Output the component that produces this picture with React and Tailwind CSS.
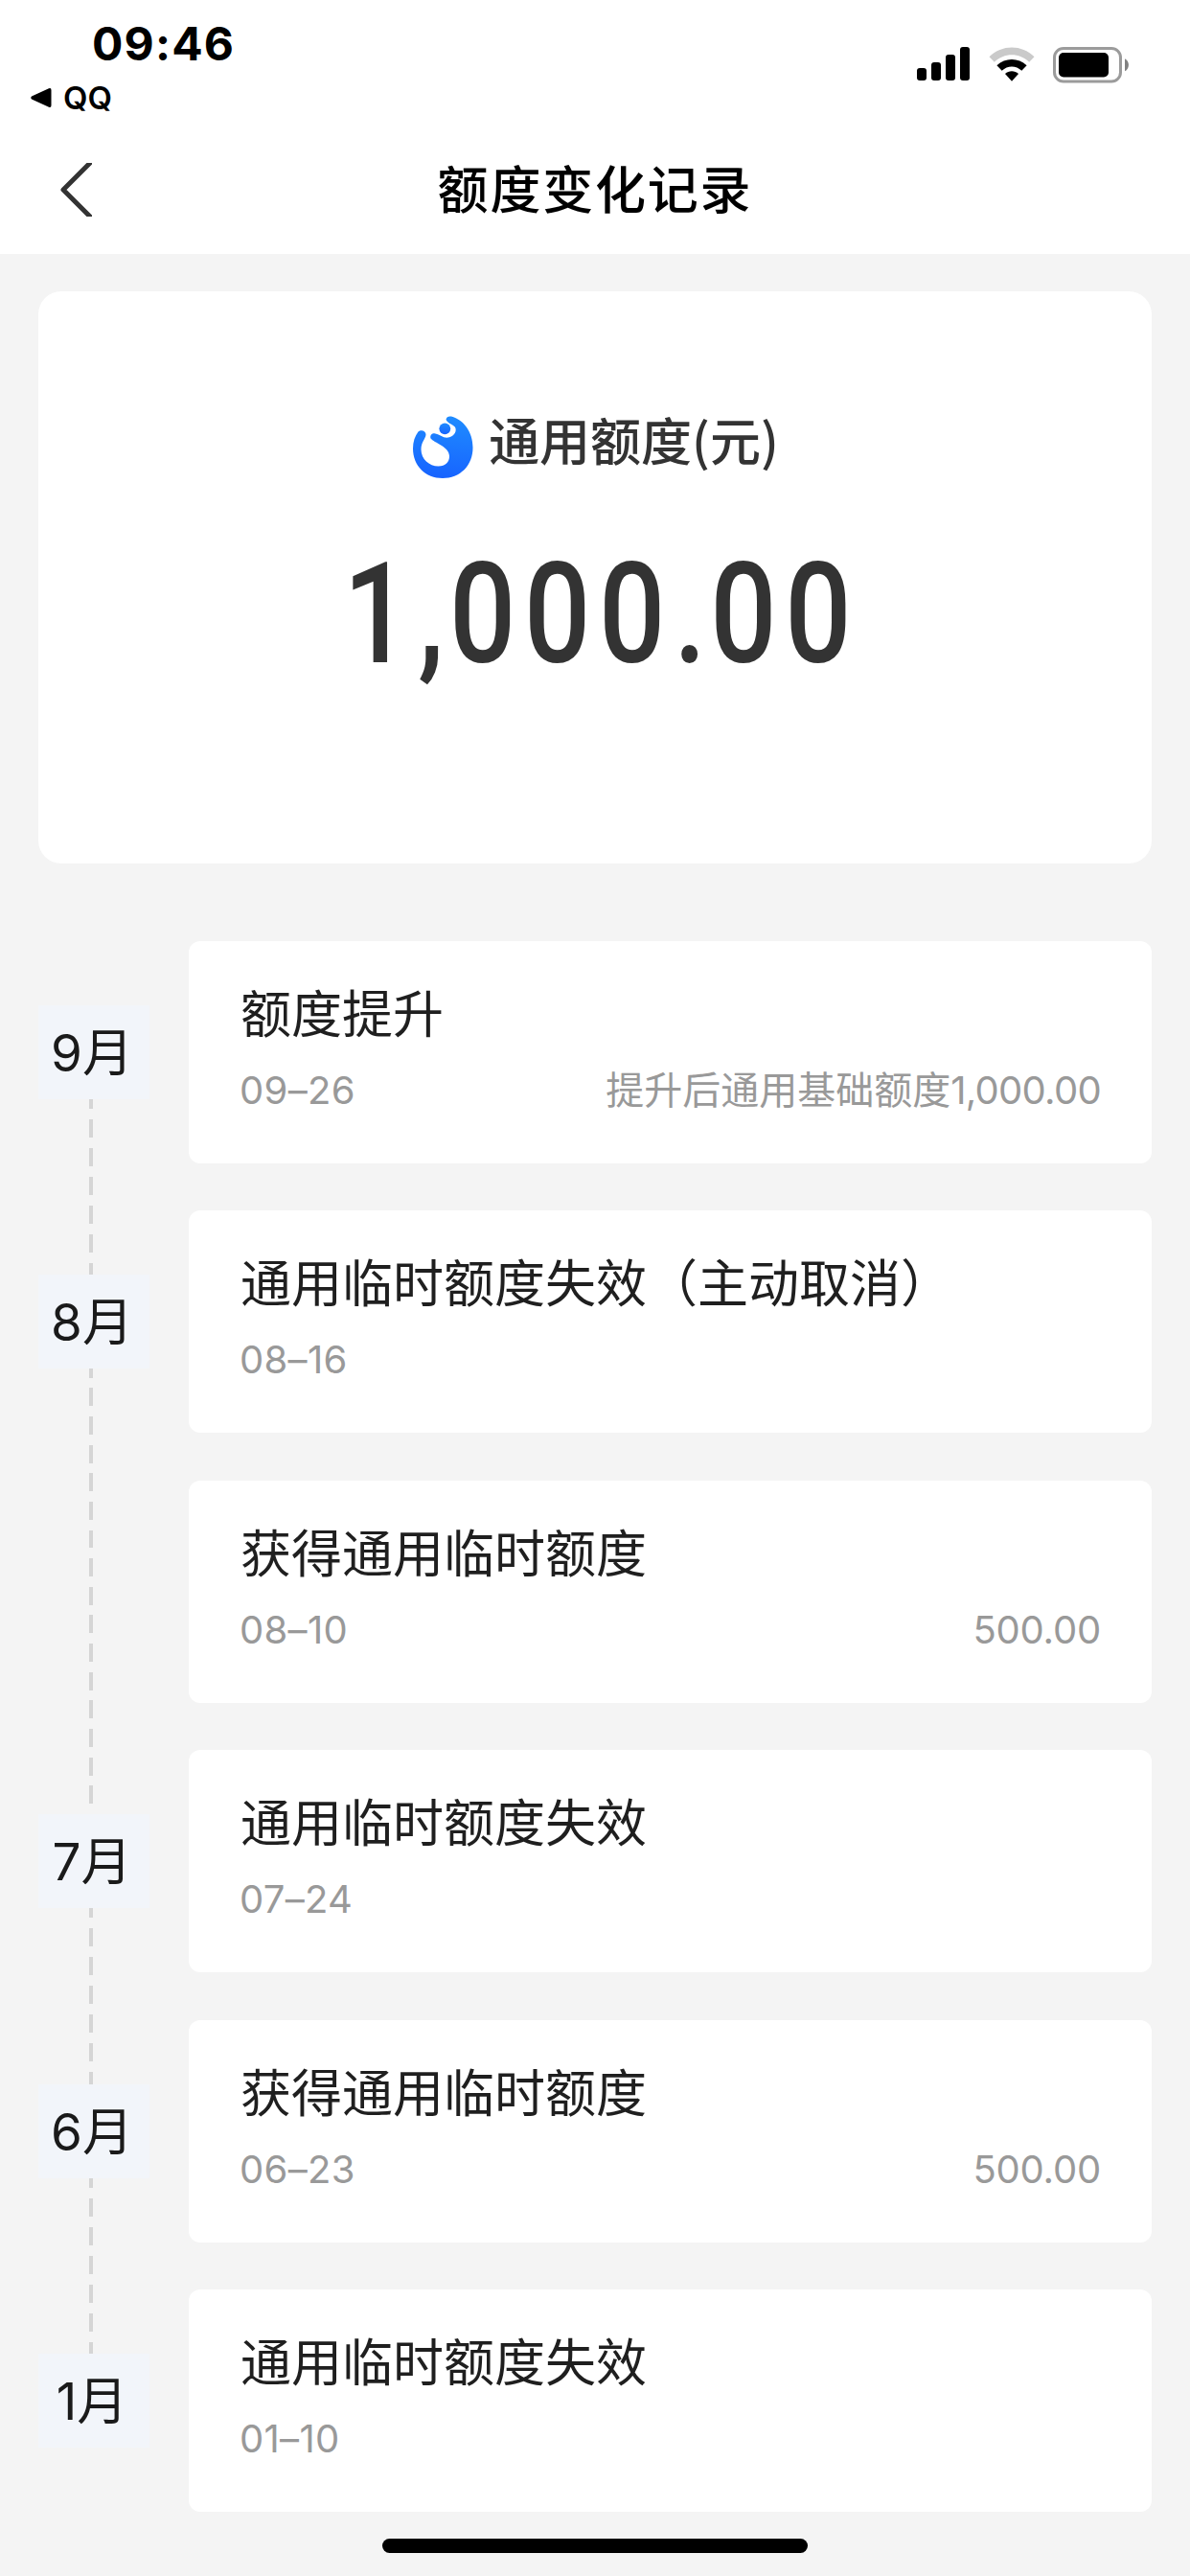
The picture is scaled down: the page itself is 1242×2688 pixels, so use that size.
const CJK = "font-['Inter','Noto_Sans_CJK_SC',sans-serif]";

const months = [
  {
    month: '9月',
    items: [{ title: '额度提升', date: '09–26', note: '提升后通用基础额度', amount: '1,000.00' }],
  },
  {
    month: '8月',
    items: [
      { title: '通用临时额度失效（主动取消）', date: '08–16' },
      { title: '获得通用临时额度', date: '08–10', amount: '500.00' },
    ],
  },
  { month: '7月', items: [{ title: '通用临时额度失效', date: '07–24' }] },
  { month: '6月', items: [{ title: '获得通用临时额度', date: '06–23', amount: '500.00' }] },
  { month: '1月', items: [{ title: '通用临时额度失效', date: '01–10' }] },
];

function SignalIcon() {
  return (
    <svg width="55" height="35" viewBox="0 0 55 35">
      <rect x="0" y="22" width="10" height="13" rx="3" />
      <rect x="15" y="16" width="10" height="19" rx="3" />
      <rect x="30" y="8" width="10" height="27" rx="3" />
      <rect x="45" y="0" width="10" height="35" rx="3" />
    </svg>
  );
}

function WifiIcon() {
  return (
    <svg width="48" height="36" viewBox="0 0 48 36">
      <path d="M0.5 10.2C13.5 -2.9 34.5 -2.9 47.5 10.2L42.2 15.8C32 5.6 16 5.6 5.8 15.8Z" fill="#cacaca" />
      <path d="M8.4 19.3C17.2 10.8 30.8 10.8 39.6 19.3L34.3 24.8C28.4 19.1 19.6 19.1 13.7 24.8Z" />
      <path d="M17 28C21 24.4 27 24.4 31 28L24 35.8Z" />
    </svg>
  );
}

function BatteryIcon() {
  return (
    <svg width="80" height="38" viewBox="0 0 80 38">
      <rect x="1.5" y="1.5" width="69" height="34.5" rx="9.5" fill="none" stroke="#9b9b9b" strokeWidth="3" />
      <rect x="6" y="6" width="52" height="25.5" rx="5" />
      <path d="M75 12.2C80.2 14.5 80.2 23 75 25.3Z" fill="#808080" />
    </svg>
  );
}

function BrandIcon() {
  return (
    <svg width="63" height="66" viewBox="0 0 63 66">
      <defs>
        <linearGradient id="brand" x1="0.5" y1="0" x2="0.4" y2="1">
          <stop offset="0" stopColor="#1f8bff" />
          <stop offset="1" stopColor="#1763ff" />
        </linearGradient>
      </defs>
      <path
        fill="url(#brand)"
        d="M34.5 3.8C34.8 1 37.5 0 40 0.600C53 4 62.500 17 62.500 33C62.500 52 49 65 31 65C13 65 0 52 0 34C0 27 2 21 5.500 16.500C8 14 13 15 13.500 19C13.600 23.500 8.500 27 8.500 35C8.500 45 17 52.500 26.500 52.500C34 52.500 38 48 38 42C38 32 22 28 18.500 23.500C17.500 20.500 19.500 17.800 22.500 18.200C28 19.300 32 23.500 37 22.500C42 21.500 45.500 17.500 44.500 13C43.500 9 36 8.500 34.500 3.800Z"
      />
      <circle cx="33.300" cy="13.300" r="5.900" fill="url(#brand)" />
    </svg>
  );
}

function Record({ title, date, note, amount }) {
  return (
    <div className="h-[232px] rounded-xl bg-white px-[54px] pt-[46px]">
      <div className="h-[62px] text-[53px] leading-[62px] whitespace-nowrap text-[#1f1f1f]">{title}</div>
      <div className="mt-[23px] flex h-[50px] items-center justify-between text-[40px] leading-[50px] whitespace-nowrap text-[#999]">
        <span className="-ml-px font-[370] tracking-[0.3px]">{date}</span>
        <span className="-mr-px">
          {note}
          <span className={note ? 'font-[370] tracking-[-0.7px]' : 'font-[370] tracking-[-0.2px]'}>{amount}</span>
        </span>
      </div>
    </div>
  );
}

const shortDash =
  'bg-[repeating-linear-gradient(to_bottom,#d5d5d5_0px,#d5d5d5_10px,transparent_10px,transparent_21px,#d5d5d5_21px,#d5d5d5_30px)]';
const longDash =
  'bg-[repeating-linear-gradient(to_bottom,#d5d5d5_0px,#d5d5d5_9.6px,transparent_9.6px,transparent_20.3px,#d5d5d5_20.3px,#d5d5d5_29.64px)]';

function MonthGroup({ month, items, last }) {
  return (
    <section className="flex">
      <div className="flex w-[157px] flex-col">
        <div className="mt-[67px] flex h-[98px] w-[116px] items-center justify-center bg-[#f2f5fa] pt-[2px] pr-[4px] text-[53px] leading-[62px] font-[370] whitespace-nowrap text-[#1a1a1a]">
          {month}
        </div>
        {!last && <div className={`-mb-[67px] ml-[53px] w-1 flex-1 ${items.length > 1 ? longDash : shortDash}`} />}
      </div>
      <div className="flex flex-1 flex-col">
        {items.map((item) => (
          <div key={item.date} className="h-[281.4px]">
            <Record {...item} />
          </div>
        ))}
      </div>
    </section>
  );
}

export default function App() {
  return (
    <div className={`${CJK} flex h-[2688px] w-[1242px] flex-col overflow-hidden bg-[#f4f4f4]`}>
      <header className="h-[265px] bg-white">
        <div className="flex h-[132px] justify-between">
          <div className="text-black">
            <div className="mt-[16px] ml-[96px] h-[60px] text-[48px] leading-[60px] font-bold tracking-[1.2px]">09:46</div>
            <div className="mt-[5px] ml-[32px] flex h-[42px] items-center gap-[12px] text-[33px] leading-[42px] font-semibold">
              <svg width="22" height="22" viewBox="0 0 22 22">
                <path d="M1 9.600L19 1.200Q21.500 0.200 21.500 3V19Q21.500 21.800 19 20.800L1 12.400Q-0.500 11 1 9.600Z" />
              </svg>
              QQ
            </div>
          </div>
          <div className="mt-[49px] mr-[63px] flex items-start">
            <SignalIcon />
            <div className="ml-[20px]"><WifiIcon /></div>
            <div className="ml-[19px]"><BatteryIcon /></div>
          </div>
        </div>
        <div className="grid h-[133px] grid-cols-[1fr_auto_1fr] items-center">
          <svg className="-mt-[2px] ml-[61px]" width="35" height="56" viewBox="0 0 35 56" fill="none" stroke="#333" strokeWidth="5">
            <path d="M34 -1L5 28L34 57" strokeLinejoin="round" />
          </svg>
          <h1 className="text-[53px] leading-[62px] font-medium tracking-[1.800px] text-black">额度变化记录</h1>
        </div>
      </header>

      <section className="mx-10 mt-[39px] flex h-[597px] shrink-0 flex-col items-center rounded-[24px] bg-white pt-[118px] text-[#333]">
        <div className="ml-[2px] flex items-start gap-[16px]">
          <div className="mt-[12px]"><BrandIcon /></div>
          <span className="font-['Noto_Sans_CJK_SC',sans-serif] text-[53px] leading-[72px] font-medium">通用额度(元)</span>
        </div>
        <div className="mt-[56px] ml-[13px] scale-x-[0.83] font-['Roboto',sans-serif] text-[147px] leading-[170px] font-medium tracking-[10.5px]">
          1<span className="tracking-[6.5px]">,</span>000<span className="tracking-[5px]">.</span>00
        </div>
      </section>

      <main className="mx-10 mt-[81px] flex h-[1640px] shrink-0 flex-col">
        {months.map((group, i) => (
          <MonthGroup key={group.month} {...group} last={i === months.length - 1} />
        ))}
      </main>

      <div className="fixed bottom-[24px] left-[399px] h-[15px] w-[444px] rounded-full bg-black" />
    </div>
  );
}
